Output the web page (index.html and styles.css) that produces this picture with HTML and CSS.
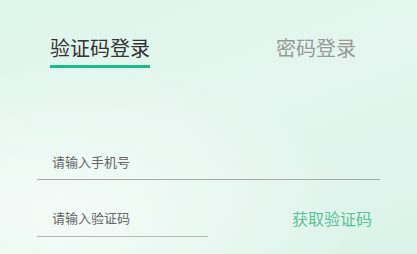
FILE: index.html
```html
<!DOCTYPE html>
<html lang="zh-CN">
<head>
  <meta charset="UTF-8">
  <title>登录</title>
  <link rel="stylesheet" href="styles.css">
</head>
<body>
  <div class="login">
    <div class="tabs">
      <div class="tab active">验证码登录</div>
      <div class="tab">密码登录</div>
    </div>
    <div class="form">
      <div class="field">
        <input class="input" type="tel" placeholder="请输入手机号">
      </div>
      <div class="field-row">
        <div class="field short">
          <input class="input" type="text" placeholder="请输入验证码">
        </div>
        <button class="get-code">获取验证码</button>
      </div>
    </div>
  </div>
</body>
</html>
```

FILE: styles.css
```css
body {
  margin: 0;
  height: 100vh;
  overflow: hidden;
  font-family: "Noto Sans CJK SC", "Noto Sans", sans-serif;
  background:
    radial-gradient(ellipse 70% 60% at 15% 85%, rgba(246,252,249,0.9), rgba(246,252,249,0) 100%),
    linear-gradient(160deg, #def6ec 0%, #e4f6ef 45%, #dbf3ea 100%);
}
.login {
  padding: 0 37px;
}
/* Tabs */
.tabs {
  display: flex;
  justify-content: space-between;
  padding: 36px 24px 0 13px;
}
.tab {
  font-size: 20px;
  line-height: 24px;
  color: #999;
  padding-bottom: 5px;
}
.tab.active {
  color: #333;
  border-bottom: 3px solid #1dba8a;
}
/* Form */
.form {
  margin-top: 82px;
}
.field {
  border-bottom: 1px solid #aaa;
}
.input {
  display: block;
  width: 100%;
  box-sizing: border-box;
  border: none;
  outline: none;
  background: transparent;
  padding: 0 15px 7px;
  height: 29px;
  font-family: inherit;
  font-size: 13px;
  color: #333;
}
.input::placeholder {
  color: #666;
}
.field-row {
  display: flex;
  align-items: center;
  justify-content: space-between;
  margin-top: 26px;
}
.field.short {
  width: 171px;
  border-bottom-color: #b8b8b8;
}
.get-code {
  border: none;
  background: none;
  padding: 0;
  margin: 0 8px 7px 0;
  font-family: inherit;
  font-size: 16px;
  color: #5bbf98;
  cursor: pointer;
}
```
